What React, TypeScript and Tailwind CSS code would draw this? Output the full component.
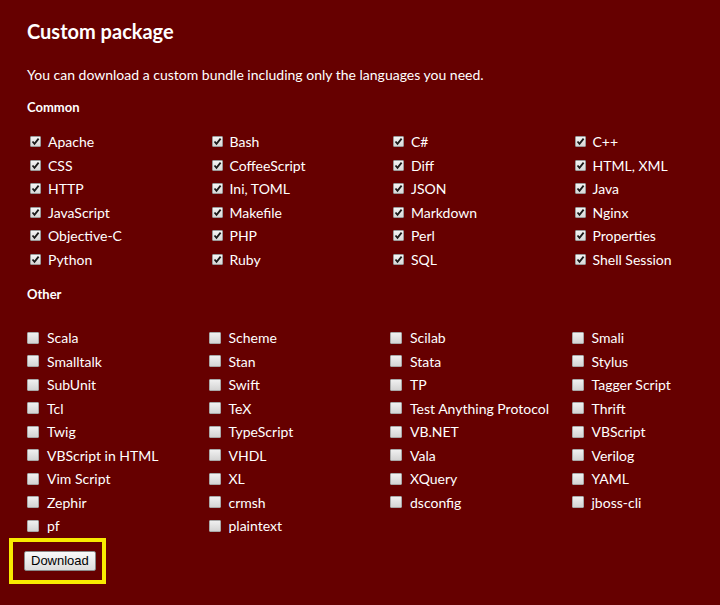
import React from 'react';

const common = [
  'Apache', 'Bash', 'C#', 'C++',
  'CSS', 'CoffeeScript', 'Diff', 'HTML, XML',
  'HTTP', 'Ini, TOML', 'JSON', 'Java',
  'JavaScript', 'Makefile', 'Markdown', 'Nginx',
  'Objective-C', 'PHP', 'Perl', 'Properties',
  'Python', 'Ruby', 'SQL', 'Shell Session',
];

const other = [
  'Scala', 'Scheme', 'Scilab', 'Smali',
  'Smalltalk', 'Stan', 'Stata', 'Stylus',
  'SubUnit', 'Swift', 'TP', 'Tagger Script',
  'Tcl', 'TeX', 'Test Anything Protocol', 'Thrift',
  'Twig', 'TypeScript', 'VB.NET', 'VBScript',
  'VBScript in HTML', 'VHDL', 'Vala', 'Verilog',
  'Vim Script', 'XL', 'XQuery', 'YAML',
  'Zephir', 'crmsh', 'dsconfig', 'jboss-cli',
  'pf', 'plaintext',
];

function CheckBox({ checked }: { checked: boolean }) {
  if (checked) {
    return (
      <span className="ml-[3px] mr-[7px] flex h-[11px] w-[11px] shrink-0 items-center justify-center rounded-[1px] border border-[#9a9a9a] bg-gradient-to-b from-[#f4f4f4] to-[#d8d8d8]">
        <svg width="9" height="9" viewBox="0 0 9 9">
          <path d="M1.5 4.5 L3.5 6.8 L7.6 1.6" fill="none" stroke="#1a1a1a" strokeWidth="1.8" />
        </svg>
      </span>
    );
  }
  return (
    <span className="mr-[8px] h-[12px] w-[12px] shrink-0 rounded-[1px] border border-[#a8a8a8] bg-gradient-to-b from-[#f0f0f0] to-[#d4d4d4]" />
  );
}

function LangGrid({ items, checked }: { items: string[]; checked: boolean }) {
  return (
    <div className="grid grid-cols-[repeat(4,181.5px)]">
      {items.map(name => (
        <label key={name} className="flex h-[23.5px] items-center whitespace-nowrap text-[14px] text-white">
          <CheckBox checked={checked} />
          <span>{name}</span>
        </label>
      ))}
    </div>
  );
}

export default function App() {
  return (
    <div className="h-[605px] w-[720px] overflow-hidden bg-[#660000] pl-[27px] pt-[16px] font-['Lato','Noto_Sans',sans-serif] text-white">
      <h1 className="text-[20px] font-bold leading-[30px]">Custom package</h1>
      <p className="mt-[19px] text-[14px] leading-[20px]">
        You can download a custom bundle including only the languages you need.
      </p>
      <h2 className="mt-[12px] text-[13px] font-bold leading-[20px]">Common</h2>
      <div className="mt-[13px]">
        <LangGrid items={common} checked />
      </div>
      <h2 className="mt-[13px] text-[13px] font-bold leading-[20px]">Other</h2>
      <div className="mt-[22px]">
        <LangGrid items={other} checked={false} />
      </div>
      <div className="-ml-[18px] flex h-[46px] w-[97px] items-center border-[4px] border-[#f8ea00] pl-[11px]">
        <button className="h-[20px] rounded-[2px] border border-[#8a8a8a] bg-gradient-to-b from-[#fafafa] to-[#dcdcdc] px-[6px] font-['Liberation_Sans',Arial,sans-serif] text-[13px] leading-[18px] text-black">
          Download
        </button>
      </div>
    </div>
  );
}
